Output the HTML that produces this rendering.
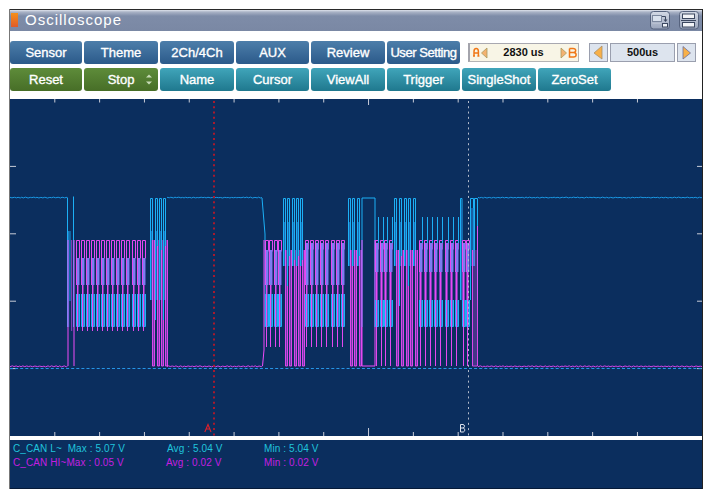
<!DOCTYPE html>
<html><head><meta charset="utf-8">
<style>
*{margin:0;padding:0;box-sizing:border-box}
html,body{width:712px;height:498px;background:#fff;overflow:hidden;font-family:"Liberation Sans",sans-serif}
.a{position:absolute}
#tb{left:9px;top:9px;width:694px;height:22px;border-top:1px solid #2a2a2a;background:linear-gradient(#dfe3ec 0px,#aab3c6 2px,#7e8ca8 6px,#7a88a4 100%)}
#ttl{left:25px;top:10px;font-size:15px;letter-spacing:1px;color:#fff;line-height:20px}
.btn{position:absolute;height:23px;border-radius:3px;color:#fff;font-size:13px;text-align:center;line-height:24px;-webkit-text-stroke:0.35px #fff}
.b1{top:41px;background:linear-gradient(#4d7eaa,#2b5a8a)}
.g1{top:68px;background:linear-gradient(#5e8c3a,#476e27)}
.t1{top:68px;background:linear-gradient(#40a5ba,#1f788e)}
svg{position:absolute;left:0;top:0}
</style></head><body>
<div id="tb" class="a"></div>
<div class="a" style="left:11px;top:13px;width:7px;height:14px;background:linear-gradient(#f5901a,#e05a28)"></div>
<div id="ttl" class="a">Oscilloscope</div>
<div class="a" style="left:9px;top:9px;width:1px;height:480px;background:#777"></div>
<div class="a" style="left:702px;top:9px;width:1px;height:480px;background:#222"></div>

<div class="btn b1" style="left:10px;width:72px">Sensor</div>
<div class="btn b1" style="left:84px;width:74px">Theme</div>
<div class="btn b1" style="left:160px;width:74px">2Ch/4Ch</div>
<div class="btn b1" style="left:236px;width:73px">AUX</div>
<div class="btn b1" style="left:311px;width:74px">Review</div>
<div class="btn b1" style="left:387px;width:73px;letter-spacing:-0.45px">User Setting</div>

<div class="btn g1" style="left:10px;width:72px">Reset</div>
<div class="btn g1" style="left:84px;width:74px">Stop</div>
<div class="btn t1" style="left:160px;width:74px">Name</div>
<div class="btn t1" style="left:236px;width:73px">Cursor</div>
<div class="btn t1" style="left:311px;width:74px">ViewAll</div>
<div class="btn t1" style="left:387px;width:73px">Trigger</div>
<div class="btn t1" style="left:462px;width:74px">SingleShot</div>
<div class="btn t1" style="left:538px;width:73px">ZeroSet</div>

<div class="a" style="left:468px;top:43px;width:111px;height:19px;background:#f8f5e6;border:1px solid #b4b4b4;border-left:2px solid #a4a4ac;border-top-color:#a8a8b0"></div>
<div class="a" style="left:589px;top:43px;width:19px;height:19px;background:#dde4ee;border:1px solid #9a9fae"></div>
<div class="a" style="left:610px;top:43px;width:65px;height:19px;background:#dde4ee;border:1px solid #9a9fae"></div>
<div class="a" style="left:677px;top:43px;width:19px;height:19px;background:#dde4ee;border:1px solid #9a9fae"></div>

<div class="a" style="left:10px;top:99px;width:692px;height:337px;background:#0b2e5e"></div>
<div class="a" style="left:10px;top:436px;width:692px;height:4px;background:#fff"></div>
<div class="a" style="left:10px;top:440px;width:692px;height:49px;background:#0b2e5e;border-bottom:1px solid #061a38"></div>

<!-- title icons -->
<svg class="a" style="left:649px;top:10px" width="22" height="21" viewBox="0 0 22 21">
<defs><linearGradient id="ig" x1="0" y1="0" x2="0" y2="1"><stop offset="0" stop-color="#d4dae6"/><stop offset="1" stop-color="#9aa5bb"/></linearGradient></defs>
<rect x="1.5" y="1.5" width="19" height="17.5" rx="3" fill="url(#ig)" stroke="#56637e"/>
<rect x="3.5" y="5.5" width="9" height="6" fill="#d8e0ec" stroke="#7c889e"/>
<path d="M3.5 13.5H12.5" stroke="#b8c0d0"/>
<path d="M13 6.5H16.5V10" stroke="#3c4860" stroke-width="1" fill="none"/>
<path d="M14.5 9.5H18.5L16.5 12Z" fill="#3c4860"/>
<rect x="13.5" y="13.5" width="5" height="3.5" fill="#f0f3f8" stroke="#3c4860"/>
</svg>
<svg class="a" style="left:678px;top:10px" width="22" height="21" viewBox="0 0 22 21">
<rect x="1.5" y="1.5" width="19" height="17.5" rx="3" fill="url(#ig)" stroke="#56637e"/>
<rect x="4.5" y="4" width="12" height="4.5" fill="#f2f4f8" stroke="#3c4860"/>
<path d="M3 10.5H18" stroke="#3c4860"/>
<rect x="4.5" y="12.5" width="12" height="4.5" fill="#f2f4f8" stroke="#3c4860"/>
</svg>
<!-- stop arrows -->
<svg class="a" style="left:144px;top:73px" width="10" height="14" viewBox="0 0 10 14">
<path d="M2 4.5L5 1.5L8 4.5Z" fill="#c9dcb8"/><path d="M2 8.5L5 11.5L8 8.5Z" fill="#c9dcb8"/>
</svg>
<!-- AB box -->
<svg class="a" style="left:468px;top:43px" width="111" height="19" viewBox="0 0 111 19">
<path d="M6 13V8.5Q6 5.5 8.2 5.5Q10.4 5.5 10.4 8.5V13M6 10H10.4M5 13H7M9.4 13H11.4" stroke="#f07818" stroke-width="1.5" fill="none"/>
<path d="M19 5L13.5 10L19 15Z" fill="#f4b270" stroke="#a89a60" stroke-width="0.8"/>
<path d="M93 5L98.5 10L93 15Z" fill="#f4b270" stroke="#a89a60" stroke-width="0.8"/>
<path d="M101.5 5.5H105C108.5 5.5 108.5 9.5 105.5 9.5H101.5M105.5 9.5C109 9.5 109 14 105.5 14H101.5V5.5" stroke="#f07818" stroke-width="1.5" fill="none"/>
</svg>
<div class="a" style="left:468px;top:43px;width:111px;height:19px;font-weight:bold;font-size:11px;line-height:19px;text-align:center;color:#111">2830 us</div>
<svg class="a" style="left:589px;top:43px" width="19" height="19" viewBox="0 0 19 19">
<path d="M13 3L5 10L13 16Z" fill="#f8b048" stroke="#a8906a" stroke-width="0.8"/>
</svg>
<svg class="a" style="left:677px;top:43px" width="19" height="19" viewBox="0 0 19 19">
<path d="M6 3.5L13.5 10L6 16Z" fill="#f8b048" stroke="#6a70a0" stroke-width="0.8"/>
</svg>
<div class="a" style="left:610px;top:43px;width:65px;height:19px;font-weight:bold;font-size:11px;line-height:19px;text-align:center;color:#111">500us</div>
<!-- info -->
<div class="a" style="left:13px;top:442px;font-size:10px;letter-spacing:0.1px;line-height:13px;color:#20c4dc;white-space:pre">C_CAN L~  Max : 5.07 V</div>
<div class="a" style="left:13px;top:456px;font-size:10px;letter-spacing:0.1px;line-height:13px;color:#c41ee0;white-space:pre">C_CAN HI~Max : 0.05 V</div>
<div class="a" style="left:167px;top:442px;font-size:10px;letter-spacing:0.1px;line-height:13px;color:#20c4dc;white-space:pre">Avg : 5.04 V</div>
<div class="a" style="left:166px;top:456px;font-size:10px;letter-spacing:0.1px;line-height:13px;color:#c41ee0;white-space:pre">Avg : 0.02 V</div>
<div class="a" style="left:264px;top:442px;font-size:10px;letter-spacing:0.1px;line-height:13px;color:#20c4dc;white-space:pre">Min : 5.04 V</div>
<div class="a" style="left:264px;top:456px;font-size:10px;letter-spacing:0.1px;line-height:13px;color:#c41ee0;white-space:pre">Min : 0.02 V</div>
<svg width="712" height="498" viewBox="0 0 712 498">
<clipPath id="cp"><rect x="10" y="99" width="692" height="337"/></clipPath><g clip-path="url(#cp)"><path d="M54.8 99V102.5" stroke="#c8ccd8"/>
<path d="M54.8 436V432" stroke="#c8ccd8"/>
<path d="M99.62 99V102.5" stroke="#c8ccd8"/>
<path d="M99.62 436V432" stroke="#c8ccd8"/>
<path d="M144.44 99V102.5" stroke="#c8ccd8"/>
<path d="M144.44 436V432" stroke="#c8ccd8"/>
<path d="M189.26 99V102.5" stroke="#c8ccd8"/>
<path d="M189.26 436V432" stroke="#c8ccd8"/>
<path d="M234.08 99V102.5" stroke="#c8ccd8"/>
<path d="M234.08 436V432" stroke="#c8ccd8"/>
<path d="M278.9 99V102.5" stroke="#c8ccd8"/>
<path d="M278.9 436V432" stroke="#c8ccd8"/>
<path d="M323.72 99V102.5" stroke="#c8ccd8"/>
<path d="M323.72 436V432" stroke="#c8ccd8"/>
<path d="M368.54 99V105" stroke="#c8ccd8"/>
<path d="M368.54 436V428" stroke="#c8ccd8"/>
<path d="M413.36 99V102.5" stroke="#c8ccd8"/>
<path d="M413.36 436V432" stroke="#c8ccd8"/>
<path d="M458.18 99V102.5" stroke="#c8ccd8"/>
<path d="M458.18 436V432" stroke="#c8ccd8"/>
<path d="M503.0 99V102.5" stroke="#c8ccd8"/>
<path d="M503.0 436V432" stroke="#c8ccd8"/>
<path d="M547.82 99V102.5" stroke="#c8ccd8"/>
<path d="M547.82 436V432" stroke="#c8ccd8"/>
<path d="M592.64 99V102.5" stroke="#c8ccd8"/>
<path d="M592.64 436V432" stroke="#c8ccd8"/>
<path d="M637.46 99V102.5" stroke="#c8ccd8"/>
<path d="M637.46 436V432" stroke="#c8ccd8"/>
<path d="M10 166.4H16" stroke="#c8ccd8"/>
<path d="M697 166.4H702" stroke="#c8ccd8"/>
<path d="M10 233.8H16" stroke="#c8ccd8"/>
<path d="M697 233.8H702" stroke="#c8ccd8"/>
<path d="M10 301.2H16" stroke="#c8ccd8"/>
<path d="M697 301.2H702" stroke="#c8ccd8"/>
<path d="M10 368.6H16" stroke="#c8ccd8"/>
<path d="M697 368.6H702" stroke="#c8ccd8"/><path d="M10 368.5H702" stroke="#2694e6" stroke-dasharray="3 2.1"/><path d="M10 197.3L11.94 197.87L14.45 197.29L16.46 197.88L18.08 197.3L20.24 197.97L21.75 197.22L23.26 197.97L25.49 197.12L28.07 198.04L30.26 197.35L31.84 197.66L33.88 197.12L35.51 197.75L36.94 197.29L38.87 197.99L40.89 197.36L42.89 197.91L44.84 197.21L47.44 198.05L49.85 197.38L51.63 197.74L53.37 197.13L55.69 197.81L58.11 197.25L60.66 197.99L62.06 197.18L64.55 197.84L67.13 197.26L67.5 197.9" stroke="#1a98e4" stroke-width="1" fill="none"/>
<path d="M167 197.3L169.33 197.76L170.84 197.23L173.4 197.95L174.94 197.2L176.46 197.67L178.81 197.17L180.89 197.83L182.51 197.39L184.07 197.91L185.61 197.27L187.27 197.76L189.83 197.42L191.6 198L193.25 197.26L195.68 197.91L197.2 197.5L198.85 197.75L201.18 197.23L202.93 197.68L204.44 197.33L206.13 197.89L207.98 197.28L210.53 197.84L212.62 197.45L214.24 197.71L216.73 197.43L218.43 197.73L220.72 197.48L222.35 198.03L224.81 197.34L226.72 197.69L228.16 197.49L229.85 197.93L231.56 197.43L233.67 197.77L235.28 197.39L236.77 197.74L238.84 197.44L240.98 197.76L243.48 197.18L244.9 197.76L246.83 197.12L248.44 197.8L250.53 197.15L252.36 198.01L254.94 197.36L257.17 197.88L258.74 197.11L260.16 198.01L262 197.49" stroke="#1a98e4" stroke-width="1" fill="none"/>
<path d="M478 197.3L479.43 197.9L481.4 197.39L483.19 198.05L484.68 197.32L486.96 198.01L489.25 197.38L491.6 198.02L493.42 197.37L495.9 198L497.8 197.42L500.24 197.88L502.39 197.25L504.49 197.89L505.98 197.36L508.58 198L510.85 197.26L513.13 197.88L515.06 197.44L516.56 197.95L518 197.34L519.97 197.74L522.21 197.3L524.35 198.02L526.06 197.1L527.82 197.92L529.46 197.17L531.95 197.91L533.88 197.46L535.67 197.92L537.31 197.27L539.67 198.02L542.13 197.25L544.23 197.78L545.79 197.3L548.2 197.99L550.45 197.48L552.18 197.72L554.13 197.21L555.78 197.82L557.93 197.3L559.71 197.99L562.29 197.28L563.78 197.66L566.23 197.12L568.48 197.88L570.25 197.42L571.67 197.7L573.62 197.11L576.01 197.74L577.58 197.12L579.74 197.83L581.89 197.36L584.26 198.03L586.48 197.18L588.45 197.72L589.87 197.29L592.12 197.72L593.85 197.24L596.09 197.86L598.22 197.4L600.1 197.97L602.58 197.13L605.1 197.94L606.66 197.28L608.81 198.01L610.66 197.33L613.12 197.97L615.65 197.29L617.83 197.73L620.1 197.43L622.27 197.94L623.92 197.46L626.5 198.04L628.54 197.42L630.33 198.01L632.76 197.24L634.26 197.83L636.32 197.41L638.3 197.66L640.67 197.13L643.03 197.72L644.83 197.42L646.4 197.71L648.42 197.39L650.83 197.93L653.36 197.3L655.9 197.68L657.57 197.31L659.32 197.94L661.48 197.31L663.9 197.87L665.67 197.25L668.08 198.01L669.73 197.44L672.3 197.86L674.38 197.18L676.43 197.85L678.55 197.11L681.12 197.86L683 197.42L685.07 197.85L687.3 197.13L689.35 197.82L691.9 197.47L693.62 197.84L695.17 197.27L697.55 198.01L699.52 197.23L701.15 197.9L702 197.15" stroke="#1a98e4" stroke-width="1" fill="none"/>
<path d="M10 366.7L12.34 365.81L13.97 366.59L16.19 365.93L18.02 366.75L19.54 366.09L21.09 366.7L22.79 365.88L24.83 366.67L26.68 365.97L28.72 366.56L30.36 366.05L32.53 366.71L34.95 366.04L37.38 366.59L39.67 366.12L42.15 366.63L43.93 366.17L45.59 366.9L48.05 365.85L49.74 366.79L51.45 365.84L53.85 366.67L56.2 365.85L58.08 366.77L59.5 365.88L61.72 366.86L64.28 365.85L66.29 366.8L67.5 366.07" stroke="#d444ea" stroke-width="1" fill="none"/>
<path d="M167 366.7L168.63 365.83L170.15 366.51L172.22 366.01L174.3 366.56L175.92 365.88L178.33 366.9L180.84 365.84L182.32 366.88L184.27 366.11L186.06 366.69L188.08 365.97L190.2 366.51L192.44 366.14L194.06 366.68L196.35 365.96L197.98 366.57L200 365.81L202.47 366.82L204.71 366.14L206.87 366.66L208.99 366L211.57 366.82L213.28 366.16L215.57 366.81L217.95 365.96L220.42 366.85L222.66 366.11L224.98 366.66L227.24 365.83L229.05 366.69L230.47 365.94L232.63 366.75L234.31 366.18L236.51 366.64L238.7 366.03L240.74 366.66L243.34 366.06L245.58 366.8L248.16 365.81L250.3 366.8L252.01 365.96L253.47 366.58L255.32 365.84L257.02 366.86L259.08 366L261.64 366.73L262 366.06" stroke="#d444ea" stroke-width="1" fill="none"/>
<path d="M478 366.7L480.37 365.83L482.49 366.8L483.94 366.17L485.53 366.69L487.14 366L489.27 366.52L491.81 365.97L493.84 366.74L495.68 365.91L497.86 366.72L499.6 366.09L501.36 366.51L503.05 365.82L504.64 366.8L506.51 366.16L508.81 366.52L511.39 366.18L512.88 366.86L514.8 365.99L517.36 366.6L519.39 366.17L521.66 366.69L524.23 366.13L526.36 366.55L528.51 365.98L530.15 366.52L532.18 365.85L534.12 366.77L536.06 365.9L538.16 366.67L540.5 366.01L543.09 366.88L545.37 365.9L546.91 366.86L549.25 366.05L551.08 366.61L553.3 366.03L555.41 366.75L557.72 365.88L559.42 366.89L561.92 366.15L563.36 366.52L565.09 365.97L567.24 366.54L569.29 365.83L570.79 366.77L572.85 366.05L574.7 366.69L576.35 365.94L578.65 366.84L580.13 365.85L582.51 366.75L584.83 365.89L586.74 366.6L589.11 365.95L591.29 366.9L593.08 366.02L595.38 366.87L597.29 365.95L598.81 366.85L600.3 365.83L602.38 366.69L604.6 365.92L606.93 366.53L608.59 366.06L610.09 366.62L612.36 366.08L614.1 366.56L615.93 366.09L617.77 366.55L620.02 366.03L622.52 366.88L625.02 365.98L627.38 366.62L629.16 365.96L631.68 366.86L633.38 365.94L635.22 366.65L637.09 365.96L638.73 366.73L641.08 366.02L643.49 366.73L645.1 366.1L647.56 366.61L648.98 366.01L651.04 366.73L653.6 366.06L655.96 366.53L658.02 366.12L659.52 366.53L661.8 366.16L663.3 366.75L664.88 366.1L667.06 366.6L668.72 366.11L670.75 366.81L672.62 365.94L675.18 366.77L677.17 366.01L679.44 366.78L681.94 365.96L684.33 366.77L686.75 366.12L689.15 366.86L691.7 366.06L693.73 366.78L696.09 365.97L698 366.56L700.29 366.2L702 366.57" stroke="#d444ea" stroke-width="1" fill="none"/>
<path d="M67.5 198V327" stroke="#1cb0f6" stroke-width="1" fill="none"/>
<path d="M73.5 196.5V327" stroke="#1cb0f6" stroke-width="1" fill="none"/>
<rect x="68" y="231" width="1.2" height="96" fill="#1a78c0"/>
<rect x="69.5" y="231" width="1" height="70" fill="#1cb0f6" opacity="0.8"/>
<rect x="71" y="240" width="1.2" height="91" fill="#9a40c8" opacity="0.8"/>
<path d="M68 366V240" stroke="#f04af8" stroke-width="1" fill="none"/>
<path d="M74 366V240" stroke="#f04af8" stroke-width="1" fill="none"/>
<path d="M76.5 258.5V240.5H79.5V258.5" stroke="#f04af8" stroke-width="1" fill="none" opacity="0.95"/>
<rect x="77" y="258" width="2" height="27" fill="#7e7cf2"/>
<rect x="76" y="258" width="1" height="27" fill="#f04af8" opacity="0.95"/>
<rect x="79" y="258" width="1" height="27" fill="#6a60d8" opacity="0.6"/>
<rect x="77" y="285" width="1" height="9" fill="#f04af8" opacity="0.95"/>
<rect x="78" y="285" width="1" height="9" fill="#9a40c8" opacity="0.7"/>
<rect x="77" y="294" width="2" height="32.5" fill="#5a88f0" opacity="0.8"/>
<path d="M76.5 294V326.5H79.5V294" stroke="#1cb0f6" stroke-width="1" fill="none"/>
<rect x="77" y="294" width="1" height="37" fill="#f04af8" opacity="0.95"/>
<path d="M81.5 258.5V240.5H84.5V258.5" stroke="#f04af8" stroke-width="1" fill="none" opacity="0.95"/>
<rect x="82" y="258" width="2" height="27" fill="#7e7cf2"/>
<rect x="81" y="258" width="1" height="27" fill="#f04af8" opacity="0.95"/>
<rect x="84" y="258" width="1" height="27" fill="#6a60d8" opacity="0.6"/>
<rect x="82" y="285" width="1" height="9" fill="#f04af8" opacity="0.95"/>
<rect x="83" y="285" width="1" height="9" fill="#9a40c8" opacity="0.7"/>
<rect x="82" y="294" width="2" height="32.5" fill="#5a88f0" opacity="0.8"/>
<path d="M81.5 294V326.5H84.5V294" stroke="#1cb0f6" stroke-width="1" fill="none"/>
<rect x="82" y="294" width="1" height="37" fill="#f04af8" opacity="0.95"/>
<path d="M86.5 258.5V240.5H89.5V258.5" stroke="#f04af8" stroke-width="1" fill="none" opacity="0.95"/>
<rect x="87" y="258" width="2" height="27" fill="#7e7cf2"/>
<rect x="86" y="258" width="1" height="27" fill="#f04af8" opacity="0.95"/>
<rect x="89" y="258" width="1" height="27" fill="#6a60d8" opacity="0.6"/>
<rect x="87" y="285" width="1" height="9" fill="#f04af8" opacity="0.95"/>
<rect x="88" y="285" width="1" height="9" fill="#9a40c8" opacity="0.7"/>
<rect x="87" y="294" width="2" height="32.5" fill="#5a88f0" opacity="0.8"/>
<path d="M86.5 294V326.5H89.5V294" stroke="#1cb0f6" stroke-width="1" fill="none"/>
<rect x="87" y="294" width="1" height="37" fill="#f04af8" opacity="0.95"/>
<path d="M91.5 258.5V240.5H94.5V258.5" stroke="#f04af8" stroke-width="1" fill="none" opacity="0.95"/>
<rect x="92" y="258" width="2" height="27" fill="#7e7cf2"/>
<rect x="91" y="258" width="1" height="27" fill="#f04af8" opacity="0.95"/>
<rect x="94" y="258" width="1" height="27" fill="#6a60d8" opacity="0.6"/>
<rect x="92" y="285" width="1" height="9" fill="#f04af8" opacity="0.95"/>
<rect x="93" y="285" width="1" height="9" fill="#9a40c8" opacity="0.7"/>
<rect x="92" y="294" width="2" height="32.5" fill="#5a88f0" opacity="0.8"/>
<path d="M91.5 294V326.5H94.5V294" stroke="#1cb0f6" stroke-width="1" fill="none"/>
<rect x="92" y="294" width="1" height="37" fill="#f04af8" opacity="0.95"/>
<path d="M96.5 258.5V240.5H99.5V258.5" stroke="#f04af8" stroke-width="1" fill="none" opacity="0.95"/>
<rect x="97" y="258" width="2" height="27" fill="#7e7cf2"/>
<rect x="96" y="258" width="1" height="27" fill="#f04af8" opacity="0.95"/>
<rect x="99" y="258" width="1" height="27" fill="#6a60d8" opacity="0.6"/>
<rect x="97" y="285" width="1" height="9" fill="#f04af8" opacity="0.95"/>
<rect x="98" y="285" width="1" height="9" fill="#9a40c8" opacity="0.7"/>
<rect x="97" y="294" width="2" height="32.5" fill="#5a88f0" opacity="0.8"/>
<path d="M96.5 294V326.5H99.5V294" stroke="#1cb0f6" stroke-width="1" fill="none"/>
<rect x="97" y="294" width="1" height="37" fill="#f04af8" opacity="0.95"/>
<path d="M101.5 258.5V240.5H104.5V258.5" stroke="#f04af8" stroke-width="1" fill="none" opacity="0.95"/>
<rect x="102" y="258" width="2" height="27" fill="#7e7cf2"/>
<rect x="101" y="258" width="1" height="27" fill="#f04af8" opacity="0.95"/>
<rect x="104" y="258" width="1" height="27" fill="#6a60d8" opacity="0.6"/>
<rect x="102" y="285" width="1" height="9" fill="#f04af8" opacity="0.95"/>
<rect x="103" y="285" width="1" height="9" fill="#9a40c8" opacity="0.7"/>
<rect x="102" y="294" width="2" height="32.5" fill="#5a88f0" opacity="0.8"/>
<path d="M101.5 294V326.5H104.5V294" stroke="#1cb0f6" stroke-width="1" fill="none"/>
<rect x="102" y="294" width="1" height="37" fill="#f04af8" opacity="0.95"/>
<path d="M106.5 258.5V240.5H109.5V258.5" stroke="#f04af8" stroke-width="1" fill="none" opacity="0.95"/>
<rect x="107" y="258" width="2" height="27" fill="#7e7cf2"/>
<rect x="106" y="258" width="1" height="27" fill="#f04af8" opacity="0.95"/>
<rect x="109" y="258" width="1" height="27" fill="#6a60d8" opacity="0.6"/>
<rect x="107" y="285" width="1" height="9" fill="#f04af8" opacity="0.95"/>
<rect x="108" y="285" width="1" height="9" fill="#9a40c8" opacity="0.7"/>
<rect x="107" y="294" width="2" height="32.5" fill="#5a88f0" opacity="0.8"/>
<path d="M106.5 294V326.5H109.5V294" stroke="#1cb0f6" stroke-width="1" fill="none"/>
<rect x="107" y="294" width="1" height="37" fill="#f04af8" opacity="0.95"/>
<path d="M111.5 258.5V240.5H114.5V258.5" stroke="#f04af8" stroke-width="1" fill="none" opacity="0.95"/>
<rect x="112" y="258" width="2" height="27" fill="#7e7cf2"/>
<rect x="111" y="258" width="1" height="27" fill="#f04af8" opacity="0.95"/>
<rect x="114" y="258" width="1" height="27" fill="#6a60d8" opacity="0.6"/>
<rect x="112" y="285" width="1" height="9" fill="#f04af8" opacity="0.95"/>
<rect x="113" y="285" width="1" height="9" fill="#9a40c8" opacity="0.7"/>
<rect x="112" y="294" width="2" height="32.5" fill="#5a88f0" opacity="0.8"/>
<path d="M111.5 294V326.5H114.5V294" stroke="#1cb0f6" stroke-width="1" fill="none"/>
<rect x="112" y="294" width="1" height="37" fill="#f04af8" opacity="0.95"/>
<path d="M116.5 258.5V240.5H119.5V258.5" stroke="#f04af8" stroke-width="1" fill="none" opacity="0.95"/>
<rect x="117" y="258" width="2" height="27" fill="#7e7cf2"/>
<rect x="116" y="258" width="1" height="27" fill="#f04af8" opacity="0.95"/>
<rect x="119" y="258" width="1" height="27" fill="#6a60d8" opacity="0.6"/>
<rect x="117" y="285" width="1" height="9" fill="#f04af8" opacity="0.95"/>
<rect x="118" y="285" width="1" height="9" fill="#9a40c8" opacity="0.7"/>
<rect x="117" y="294" width="2" height="32.5" fill="#5a88f0" opacity="0.8"/>
<path d="M116.5 294V326.5H119.5V294" stroke="#1cb0f6" stroke-width="1" fill="none"/>
<rect x="117" y="294" width="1" height="37" fill="#f04af8" opacity="0.95"/>
<path d="M121.5 258.5V240.5H124.5V258.5" stroke="#f04af8" stroke-width="1" fill="none" opacity="0.95"/>
<rect x="122" y="258" width="2" height="27" fill="#7e7cf2"/>
<rect x="121" y="258" width="1" height="27" fill="#f04af8" opacity="0.95"/>
<rect x="124" y="258" width="1" height="27" fill="#6a60d8" opacity="0.6"/>
<rect x="122" y="285" width="1" height="9" fill="#f04af8" opacity="0.95"/>
<rect x="123" y="285" width="1" height="9" fill="#9a40c8" opacity="0.7"/>
<rect x="122" y="294" width="2" height="32.5" fill="#5a88f0" opacity="0.8"/>
<path d="M121.5 294V326.5H124.5V294" stroke="#1cb0f6" stroke-width="1" fill="none"/>
<rect x="122" y="294" width="1" height="37" fill="#f04af8" opacity="0.95"/>
<path d="M126.5 258.5V240.5H129.5V258.5" stroke="#f04af8" stroke-width="1" fill="none" opacity="0.95"/>
<rect x="127" y="258" width="2" height="27" fill="#7e7cf2"/>
<rect x="126" y="258" width="1" height="27" fill="#f04af8" opacity="0.95"/>
<rect x="129" y="258" width="1" height="27" fill="#6a60d8" opacity="0.6"/>
<rect x="127" y="285" width="1" height="9" fill="#f04af8" opacity="0.95"/>
<rect x="128" y="285" width="1" height="9" fill="#9a40c8" opacity="0.7"/>
<rect x="127" y="294" width="2" height="32.5" fill="#5a88f0" opacity="0.8"/>
<path d="M126.5 294V326.5H129.5V294" stroke="#1cb0f6" stroke-width="1" fill="none"/>
<rect x="127" y="294" width="1" height="37" fill="#f04af8" opacity="0.95"/>
<path d="M132.5 258.5V240.5H135.5V258.5" stroke="#f04af8" stroke-width="1" fill="none" opacity="0.95"/>
<rect x="133" y="258" width="2" height="27" fill="#7e7cf2"/>
<rect x="132" y="258" width="1" height="27" fill="#f04af8" opacity="0.95"/>
<rect x="135" y="258" width="1" height="27" fill="#6a60d8" opacity="0.6"/>
<rect x="133" y="285" width="1" height="9" fill="#f04af8" opacity="0.95"/>
<rect x="134" y="285" width="1" height="9" fill="#9a40c8" opacity="0.7"/>
<rect x="133" y="294" width="2" height="32.5" fill="#5a88f0" opacity="0.8"/>
<path d="M132.5 294V326.5H135.5V294" stroke="#1cb0f6" stroke-width="1" fill="none"/>
<rect x="133" y="294" width="1" height="37" fill="#f04af8" opacity="0.95"/>
<path d="M137.5 258.5V240.5H140.5V258.5" stroke="#f04af8" stroke-width="1" fill="none" opacity="0.95"/>
<rect x="138" y="258" width="2" height="27" fill="#7e7cf2"/>
<rect x="137" y="258" width="1" height="27" fill="#f04af8" opacity="0.95"/>
<rect x="140" y="258" width="1" height="27" fill="#6a60d8" opacity="0.6"/>
<rect x="138" y="285" width="1" height="9" fill="#f04af8" opacity="0.95"/>
<rect x="139" y="285" width="1" height="9" fill="#9a40c8" opacity="0.7"/>
<rect x="138" y="294" width="2" height="32.5" fill="#5a88f0" opacity="0.8"/>
<path d="M137.5 294V326.5H140.5V294" stroke="#1cb0f6" stroke-width="1" fill="none"/>
<rect x="138" y="294" width="1" height="37" fill="#f04af8" opacity="0.95"/>
<path d="M142.5 258.5V240.5H145.5V258.5" stroke="#f04af8" stroke-width="1" fill="none" opacity="0.95"/>
<rect x="143" y="258" width="2" height="27" fill="#7e7cf2"/>
<rect x="142" y="258" width="1" height="27" fill="#f04af8" opacity="0.95"/>
<rect x="145" y="258" width="1" height="27" fill="#6a60d8" opacity="0.6"/>
<rect x="143" y="285" width="1" height="9" fill="#f04af8" opacity="0.95"/>
<rect x="144" y="285" width="1" height="9" fill="#9a40c8" opacity="0.7"/>
<rect x="143" y="294" width="2" height="32.5" fill="#5a88f0" opacity="0.8"/>
<path d="M142.5 294V326.5H145.5V294" stroke="#1cb0f6" stroke-width="1" fill="none"/>
<rect x="143" y="294" width="1" height="37" fill="#f04af8" opacity="0.95"/>
<rect x="151" y="231" width="1" height="69" fill="#1a6cb4"/>
<path d="M150.5 300V198.5H152.5V300" stroke="#1cb0f6" stroke-width="1" fill="none"/>
<rect x="153" y="240" width="1" height="126" fill="#9a40c8" opacity="0.7"/>
<path d="M152.5 240V366H154.5V240" stroke="#f04af8" stroke-width="1" fill="none" opacity="0.9"/>
<rect x="156" y="231" width="1" height="69" fill="#1a6cb4"/>
<path d="M155.5 320V198.5H157.5V300" stroke="#1cb0f6" stroke-width="1" fill="none"/>
<rect x="158" y="240" width="1" height="126" fill="#9a40c8" opacity="0.7"/>
<path d="M157.5 246V366H159.5V240" stroke="#f04af8" stroke-width="1" fill="none" opacity="0.9"/>
<rect x="160" y="231" width="1" height="69" fill="#1a6cb4"/>
<path d="M159.5 300V198.5H161.5V300" stroke="#1cb0f6" stroke-width="1" fill="none"/>
<rect x="162" y="240" width="1" height="126" fill="#9a40c8" opacity="0.7"/>
<path d="M161.5 250V366H163.5V240" stroke="#f04af8" stroke-width="1" fill="none" opacity="0.9"/>
<rect x="164" y="231" width="1" height="69" fill="#1a6cb4"/>
<path d="M163.5 320V198.5H165.5V300" stroke="#1cb0f6" stroke-width="1" fill="none"/>
<rect x="166" y="240" width="1" height="126" fill="#9a40c8" opacity="0.7"/>
<path d="M165.5 246V366H167.5V240" stroke="#f04af8" stroke-width="1" fill="none" opacity="0.9"/>
<path d="M262 198L265 234V327" stroke="#1cb0f6" stroke-width="1" fill="none"/>
<path d="M262.5 366L264 350V240" stroke="#f04af8" stroke-width="1" fill="none"/>
<path d="M265.5 251.5V240.5H268.5V251.5" stroke="#f04af8" stroke-width="1" fill="none" opacity="0.95"/>
<rect x="266" y="250" width="2" height="35" fill="#7e7cf2"/>
<rect x="265" y="250" width="1" height="35" fill="#f04af8" opacity="0.95"/>
<rect x="268" y="250" width="1" height="35" fill="#6a60d8" opacity="0.6"/>
<rect x="266" y="285" width="1" height="9" fill="#f04af8" opacity="0.95"/>
<rect x="267" y="285" width="1" height="9" fill="#9a40c8" opacity="0.7"/>
<rect x="266" y="294" width="2" height="32.5" fill="#5a88f0" opacity="0.8"/>
<path d="M265.5 294V326.5H268.5V294" stroke="#1cb0f6" stroke-width="1" fill="none"/>
<rect x="266" y="294" width="1" height="53" fill="#f04af8" opacity="0.95"/>
<path d="M269.5 251.5V240.5H272.5V251.5" stroke="#f04af8" stroke-width="1" fill="none" opacity="0.95"/>
<rect x="270" y="250" width="2" height="35" fill="#7e7cf2"/>
<rect x="269" y="250" width="1" height="35" fill="#f04af8" opacity="0.95"/>
<rect x="272" y="250" width="1" height="35" fill="#6a60d8" opacity="0.6"/>
<rect x="270" y="285" width="1" height="9" fill="#f04af8" opacity="0.95"/>
<rect x="271" y="285" width="1" height="9" fill="#9a40c8" opacity="0.7"/>
<rect x="270" y="294" width="2" height="32.5" fill="#5a88f0" opacity="0.8"/>
<path d="M269.5 294V326.5H272.5V294" stroke="#1cb0f6" stroke-width="1" fill="none"/>
<rect x="270" y="294" width="1" height="53" fill="#f04af8" opacity="0.95"/>
<path d="M274.5 251.5V240.5H277.5V251.5" stroke="#f04af8" stroke-width="1" fill="none" opacity="0.95"/>
<rect x="275" y="250" width="2" height="35" fill="#7e7cf2"/>
<rect x="274" y="250" width="1" height="35" fill="#f04af8" opacity="0.95"/>
<rect x="277" y="250" width="1" height="35" fill="#6a60d8" opacity="0.6"/>
<rect x="275" y="285" width="1" height="9" fill="#f04af8" opacity="0.95"/>
<rect x="276" y="285" width="1" height="9" fill="#9a40c8" opacity="0.7"/>
<rect x="275" y="294" width="2" height="32.5" fill="#5a88f0" opacity="0.8"/>
<path d="M274.5 294V326.5H277.5V294" stroke="#1cb0f6" stroke-width="1" fill="none"/>
<rect x="275" y="294" width="1" height="53" fill="#f04af8" opacity="0.95"/>
<path d="M278.5 251.5V240.5H281.5V251.5" stroke="#f04af8" stroke-width="1" fill="none" opacity="0.95"/>
<rect x="279" y="250" width="2" height="35" fill="#7e7cf2"/>
<rect x="278" y="250" width="1" height="35" fill="#f04af8" opacity="0.95"/>
<rect x="281" y="250" width="1" height="35" fill="#6a60d8" opacity="0.6"/>
<rect x="279" y="285" width="1" height="9" fill="#f04af8" opacity="0.95"/>
<rect x="280" y="285" width="1" height="9" fill="#9a40c8" opacity="0.7"/>
<rect x="279" y="294" width="2" height="32.5" fill="#5a88f0" opacity="0.8"/>
<path d="M278.5 294V326.5H281.5V294" stroke="#1cb0f6" stroke-width="1" fill="none"/>
<rect x="279" y="294" width="1" height="53" fill="#f04af8" opacity="0.95"/>
<rect x="284" y="222" width="1" height="44" fill="#1a6cb4"/>
<path d="M283.5 266V198.5H285.5V266" stroke="#1cb0f6" stroke-width="1" fill="none"/>
<rect x="286" y="250" width="1" height="116" fill="#9a40c8" opacity="0.7"/>
<path d="M285.5 250V366H287.5V250" stroke="#f04af8" stroke-width="1" fill="none" opacity="0.9"/>
<rect x="288" y="222" width="1" height="44" fill="#1a6cb4"/>
<path d="M287.5 286V198.5H289.5V266" stroke="#1cb0f6" stroke-width="1" fill="none"/>
<rect x="290" y="250" width="1" height="116" fill="#9a40c8" opacity="0.7"/>
<path d="M289.5 256V366H291.5V250" stroke="#f04af8" stroke-width="1" fill="none" opacity="0.9"/>
<rect x="293" y="222" width="1" height="44" fill="#1a6cb4"/>
<path d="M292.5 266V198.5H294.5V266" stroke="#1cb0f6" stroke-width="1" fill="none"/>
<rect x="295" y="250" width="1" height="116" fill="#9a40c8" opacity="0.7"/>
<path d="M294.5 260V366H296.5V250" stroke="#f04af8" stroke-width="1" fill="none" opacity="0.9"/>
<rect x="297" y="222" width="1" height="44" fill="#1a6cb4"/>
<path d="M296.5 266V198.5H298.5V266" stroke="#1cb0f6" stroke-width="1" fill="none"/>
<rect x="299" y="250" width="1" height="116" fill="#9a40c8" opacity="0.7"/>
<path d="M298.5 256V366H300.5V250" stroke="#f04af8" stroke-width="1" fill="none" opacity="0.9"/>
<rect x="301" y="222" width="1" height="44" fill="#1a6cb4"/>
<path d="M300.5 266V198.5H302.5V266" stroke="#1cb0f6" stroke-width="1" fill="none"/>
<rect x="303" y="250" width="1" height="116" fill="#9a40c8" opacity="0.7"/>
<path d="M302.5 260V366H304.5V250" stroke="#f04af8" stroke-width="1" fill="none" opacity="0.9"/>
<path d="M305.5 249.5V240.5H308.5V249.5" stroke="#f04af8" stroke-width="1" fill="none" opacity="0.95"/>
<rect x="306" y="243" width="2" height="42" fill="#7e7cf2"/>
<rect x="305" y="243" width="1" height="42" fill="#f04af8" opacity="0.95"/>
<rect x="308" y="243" width="1" height="42" fill="#6a60d8" opacity="0.6"/>
<rect x="306" y="285" width="1" height="9" fill="#f04af8" opacity="0.95"/>
<rect x="307" y="285" width="1" height="9" fill="#9a40c8" opacity="0.7"/>
<rect x="306" y="294" width="2" height="32.5" fill="#5a88f0" opacity="0.8"/>
<path d="M305.5 294V326.5H308.5V294" stroke="#1cb0f6" stroke-width="1" fill="none"/>
<rect x="306" y="294" width="1" height="53" fill="#f04af8" opacity="0.95"/>
<path d="M310.5 249.5V240.5H313.5V249.5" stroke="#f04af8" stroke-width="1" fill="none" opacity="0.95"/>
<rect x="311" y="243" width="2" height="42" fill="#7e7cf2"/>
<rect x="310" y="243" width="1" height="42" fill="#f04af8" opacity="0.95"/>
<rect x="313" y="243" width="1" height="42" fill="#6a60d8" opacity="0.6"/>
<rect x="311" y="285" width="1" height="9" fill="#f04af8" opacity="0.95"/>
<rect x="312" y="285" width="1" height="9" fill="#9a40c8" opacity="0.7"/>
<rect x="311" y="294" width="2" height="32.5" fill="#5a88f0" opacity="0.8"/>
<path d="M310.5 294V326.5H313.5V294" stroke="#1cb0f6" stroke-width="1" fill="none"/>
<rect x="311" y="294" width="1" height="53" fill="#f04af8" opacity="0.95"/>
<path d="M315.5 249.5V240.5H318.5V249.5" stroke="#f04af8" stroke-width="1" fill="none" opacity="0.95"/>
<rect x="316" y="243" width="2" height="42" fill="#7e7cf2"/>
<rect x="315" y="243" width="1" height="42" fill="#f04af8" opacity="0.95"/>
<rect x="318" y="243" width="1" height="42" fill="#6a60d8" opacity="0.6"/>
<rect x="316" y="285" width="1" height="9" fill="#f04af8" opacity="0.95"/>
<rect x="317" y="285" width="1" height="9" fill="#9a40c8" opacity="0.7"/>
<rect x="316" y="294" width="2" height="32.5" fill="#5a88f0" opacity="0.8"/>
<path d="M315.5 294V326.5H318.5V294" stroke="#1cb0f6" stroke-width="1" fill="none"/>
<rect x="316" y="294" width="1" height="53" fill="#f04af8" opacity="0.95"/>
<path d="M320.5 249.5V240.5H323.5V249.5" stroke="#f04af8" stroke-width="1" fill="none" opacity="0.95"/>
<rect x="321" y="243" width="2" height="42" fill="#7e7cf2"/>
<rect x="320" y="243" width="1" height="42" fill="#f04af8" opacity="0.95"/>
<rect x="323" y="243" width="1" height="42" fill="#6a60d8" opacity="0.6"/>
<rect x="321" y="285" width="1" height="9" fill="#f04af8" opacity="0.95"/>
<rect x="322" y="285" width="1" height="9" fill="#9a40c8" opacity="0.7"/>
<rect x="321" y="294" width="2" height="32.5" fill="#5a88f0" opacity="0.8"/>
<path d="M320.5 294V326.5H323.5V294" stroke="#1cb0f6" stroke-width="1" fill="none"/>
<rect x="321" y="294" width="1" height="53" fill="#f04af8" opacity="0.95"/>
<path d="M325.5 249.5V240.5H328.5V249.5" stroke="#f04af8" stroke-width="1" fill="none" opacity="0.95"/>
<rect x="326" y="243" width="2" height="42" fill="#7e7cf2"/>
<rect x="325" y="243" width="1" height="42" fill="#f04af8" opacity="0.95"/>
<rect x="328" y="243" width="1" height="42" fill="#6a60d8" opacity="0.6"/>
<rect x="326" y="285" width="1" height="9" fill="#f04af8" opacity="0.95"/>
<rect x="327" y="285" width="1" height="9" fill="#9a40c8" opacity="0.7"/>
<rect x="326" y="294" width="2" height="32.5" fill="#5a88f0" opacity="0.8"/>
<path d="M325.5 294V326.5H328.5V294" stroke="#1cb0f6" stroke-width="1" fill="none"/>
<rect x="326" y="294" width="1" height="53" fill="#f04af8" opacity="0.95"/>
<path d="M331.5 249.5V240.5H334.5V249.5" stroke="#f04af8" stroke-width="1" fill="none" opacity="0.95"/>
<rect x="332" y="243" width="2" height="42" fill="#7e7cf2"/>
<rect x="331" y="243" width="1" height="42" fill="#f04af8" opacity="0.95"/>
<rect x="334" y="243" width="1" height="42" fill="#6a60d8" opacity="0.6"/>
<rect x="332" y="285" width="1" height="9" fill="#f04af8" opacity="0.95"/>
<rect x="333" y="285" width="1" height="9" fill="#9a40c8" opacity="0.7"/>
<rect x="332" y="294" width="2" height="32.5" fill="#5a88f0" opacity="0.8"/>
<path d="M331.5 294V326.5H334.5V294" stroke="#1cb0f6" stroke-width="1" fill="none"/>
<rect x="332" y="294" width="1" height="53" fill="#f04af8" opacity="0.95"/>
<path d="M336.5 249.5V240.5H339.5V249.5" stroke="#f04af8" stroke-width="1" fill="none" opacity="0.95"/>
<rect x="337" y="243" width="2" height="42" fill="#7e7cf2"/>
<rect x="336" y="243" width="1" height="42" fill="#f04af8" opacity="0.95"/>
<rect x="339" y="243" width="1" height="42" fill="#6a60d8" opacity="0.6"/>
<rect x="337" y="285" width="1" height="9" fill="#f04af8" opacity="0.95"/>
<rect x="338" y="285" width="1" height="9" fill="#9a40c8" opacity="0.7"/>
<rect x="337" y="294" width="2" height="32.5" fill="#5a88f0" opacity="0.8"/>
<path d="M336.5 294V326.5H339.5V294" stroke="#1cb0f6" stroke-width="1" fill="none"/>
<rect x="337" y="294" width="1" height="53" fill="#f04af8" opacity="0.95"/>
<path d="M341.5 249.5V240.5H344.5V249.5" stroke="#f04af8" stroke-width="1" fill="none" opacity="0.95"/>
<rect x="342" y="243" width="2" height="42" fill="#7e7cf2"/>
<rect x="341" y="243" width="1" height="42" fill="#f04af8" opacity="0.95"/>
<rect x="344" y="243" width="1" height="42" fill="#6a60d8" opacity="0.6"/>
<rect x="342" y="285" width="1" height="9" fill="#f04af8" opacity="0.95"/>
<rect x="343" y="285" width="1" height="9" fill="#9a40c8" opacity="0.7"/>
<rect x="342" y="294" width="2" height="32.5" fill="#5a88f0" opacity="0.8"/>
<path d="M341.5 294V326.5H344.5V294" stroke="#1cb0f6" stroke-width="1" fill="none"/>
<rect x="342" y="294" width="1" height="53" fill="#f04af8" opacity="0.95"/>
<rect x="349" y="222" width="1" height="44" fill="#1a6cb4"/>
<path d="M348.5 266V198.5H350.5V266" stroke="#1cb0f6" stroke-width="1" fill="none"/>
<rect x="351" y="250" width="1" height="116" fill="#9a40c8" opacity="0.7"/>
<path d="M350.5 250V366H352.5V250" stroke="#f04af8" stroke-width="1" fill="none" opacity="0.9"/>
<rect x="353" y="222" width="1" height="44" fill="#1a6cb4"/>
<path d="M352.5 266V198.5H354.5V266" stroke="#1cb0f6" stroke-width="1" fill="none"/>
<rect x="355" y="250" width="1" height="116" fill="#9a40c8" opacity="0.7"/>
<path d="M354.5 250V366H356.5V250" stroke="#f04af8" stroke-width="1" fill="none" opacity="0.9"/>
<rect x="358" y="222" width="1" height="44" fill="#1a6cb4"/>
<path d="M357.5 266V198.5H359.5V266" stroke="#1cb0f6" stroke-width="1" fill="none"/>
<rect x="360" y="250" width="1" height="116" fill="#9a40c8" opacity="0.7"/>
<path d="M359.5 256V366H361.5V250" stroke="#f04af8" stroke-width="1" fill="none" opacity="0.9"/>
<path d="M362 327V198H375V222V327" stroke="#1cb0f6" stroke-width="1" fill="none"/>
<path d="M362 240V366H375V240" stroke="#f04af8" stroke-width="1" fill="none"/>
<path d="M375.5 249.5V240.5H378.5V249.5" stroke="#f04af8" stroke-width="1" fill="none" opacity="0.95"/>
<rect x="376" y="243" width="2" height="29" fill="#7e7cf2"/>
<rect x="375" y="243" width="1" height="29" fill="#f04af8" opacity="0.95"/>
<rect x="378" y="243" width="1" height="29" fill="#6a60d8" opacity="0.6"/>
<rect x="375" y="272" width="3" height="28" fill="#9a40c8" opacity="0.8"/>
<rect x="376" y="272" width="1" height="28" fill="#f04af8" opacity="0.95"/>
<rect x="376" y="300" width="2" height="26.5" fill="#5a88f0" opacity="0.8"/>
<path d="M375.5 300V326.5H378.5V300" stroke="#1cb0f6" stroke-width="1" fill="none"/>
<rect x="376" y="300" width="1" height="66" fill="#f04af8" opacity="0.95"/>
<rect x="378" y="217" width="1" height="26" fill="#1cb0f6"/>
<path d="M380.5 249.5V240.5H383.5V249.5" stroke="#f04af8" stroke-width="1" fill="none" opacity="0.95"/>
<rect x="381" y="243" width="2" height="29" fill="#7e7cf2"/>
<rect x="380" y="243" width="1" height="29" fill="#f04af8" opacity="0.95"/>
<rect x="383" y="243" width="1" height="29" fill="#6a60d8" opacity="0.6"/>
<rect x="380" y="272" width="3" height="28" fill="#9a40c8" opacity="0.8"/>
<rect x="381" y="272" width="1" height="28" fill="#f04af8" opacity="0.95"/>
<rect x="381" y="300" width="2" height="26.5" fill="#5a88f0" opacity="0.8"/>
<path d="M380.5 300V326.5H383.5V300" stroke="#1cb0f6" stroke-width="1" fill="none"/>
<rect x="381" y="300" width="1" height="66" fill="#f04af8" opacity="0.95"/>
<rect x="383" y="217" width="1" height="26" fill="#1cb0f6"/>
<path d="M384.5 249.5V240.5H387.5V249.5" stroke="#f04af8" stroke-width="1" fill="none" opacity="0.95"/>
<rect x="385" y="243" width="2" height="29" fill="#7e7cf2"/>
<rect x="384" y="243" width="1" height="29" fill="#f04af8" opacity="0.95"/>
<rect x="387" y="243" width="1" height="29" fill="#6a60d8" opacity="0.6"/>
<rect x="384" y="272" width="3" height="28" fill="#9a40c8" opacity="0.8"/>
<rect x="385" y="272" width="1" height="28" fill="#f04af8" opacity="0.95"/>
<rect x="385" y="300" width="2" height="26.5" fill="#5a88f0" opacity="0.8"/>
<path d="M384.5 300V326.5H387.5V300" stroke="#1cb0f6" stroke-width="1" fill="none"/>
<rect x="385" y="300" width="1" height="66" fill="#f04af8" opacity="0.95"/>
<rect x="387" y="217" width="1" height="26" fill="#1cb0f6"/>
<path d="M389.5 249.5V240.5H392.5V249.5" stroke="#f04af8" stroke-width="1" fill="none" opacity="0.95"/>
<rect x="390" y="243" width="2" height="29" fill="#7e7cf2"/>
<rect x="389" y="243" width="1" height="29" fill="#f04af8" opacity="0.95"/>
<rect x="392" y="243" width="1" height="29" fill="#6a60d8" opacity="0.6"/>
<rect x="389" y="272" width="3" height="28" fill="#9a40c8" opacity="0.8"/>
<rect x="390" y="272" width="1" height="28" fill="#f04af8" opacity="0.95"/>
<rect x="390" y="300" width="2" height="26.5" fill="#5a88f0" opacity="0.8"/>
<path d="M389.5 300V326.5H392.5V300" stroke="#1cb0f6" stroke-width="1" fill="none"/>
<rect x="390" y="300" width="1" height="66" fill="#f04af8" opacity="0.95"/>
<rect x="392" y="217" width="1" height="26" fill="#1cb0f6"/>
<rect x="395" y="222" width="1" height="44" fill="#1a6cb4"/>
<path d="M394.5 266V198.5H396.5V266" stroke="#1cb0f6" stroke-width="1" fill="none"/>
<rect x="397" y="250" width="1" height="116" fill="#9a40c8" opacity="0.7"/>
<path d="M396.5 250V366H398.5V250" stroke="#f04af8" stroke-width="1" fill="none" opacity="0.9"/>
<rect x="400" y="222" width="1" height="44" fill="#1a6cb4"/>
<path d="M399.5 306V198.5H401.5V266" stroke="#1cb0f6" stroke-width="1" fill="none"/>
<rect x="402" y="250" width="1" height="116" fill="#9a40c8" opacity="0.7"/>
<path d="M401.5 256V366H403.5V250" stroke="#f04af8" stroke-width="1" fill="none" opacity="0.9"/>
<rect x="405" y="222" width="1" height="44" fill="#1a6cb4"/>
<path d="M404.5 266V198.5H406.5V266" stroke="#1cb0f6" stroke-width="1" fill="none"/>
<rect x="407" y="250" width="1" height="116" fill="#9a40c8" opacity="0.7"/>
<path d="M406.5 250V366H408.5V250" stroke="#f04af8" stroke-width="1" fill="none" opacity="0.9"/>
<rect x="409" y="222" width="1" height="44" fill="#1a6cb4"/>
<path d="M408.5 286V198.5H410.5V266" stroke="#1cb0f6" stroke-width="1" fill="none"/>
<rect x="411" y="250" width="1" height="116" fill="#9a40c8" opacity="0.7"/>
<path d="M410.5 250V366H412.5V250" stroke="#f04af8" stroke-width="1" fill="none" opacity="0.9"/>
<rect x="414" y="222" width="1" height="44" fill="#1a6cb4"/>
<path d="M413.5 266V198.5H415.5V266" stroke="#1cb0f6" stroke-width="1" fill="none"/>
<rect x="416" y="250" width="1" height="116" fill="#9a40c8" opacity="0.7"/>
<path d="M415.5 250V366H417.5V250" stroke="#f04af8" stroke-width="1" fill="none" opacity="0.9"/>
<path d="M419.5 249.5V240.5H422.5V249.5" stroke="#f04af8" stroke-width="1" fill="none" opacity="0.95"/>
<rect x="420" y="243" width="2" height="29" fill="#7e7cf2"/>
<rect x="419" y="243" width="1" height="29" fill="#f04af8" opacity="0.95"/>
<rect x="422" y="243" width="1" height="29" fill="#6a60d8" opacity="0.6"/>
<rect x="419" y="272" width="3" height="28" fill="#9a40c8" opacity="0.8"/>
<rect x="420" y="272" width="1" height="28" fill="#f04af8" opacity="0.95"/>
<rect x="420" y="300" width="2" height="26.5" fill="#5a88f0" opacity="0.8"/>
<path d="M419.5 300V326.5H422.5V300" stroke="#1cb0f6" stroke-width="1" fill="none"/>
<rect x="420" y="300" width="1" height="66" fill="#f04af8" opacity="0.95"/>
<rect x="422" y="217" width="1" height="26" fill="#1cb0f6"/>
<path d="M424.5 249.5V240.5H427.5V249.5" stroke="#f04af8" stroke-width="1" fill="none" opacity="0.95"/>
<rect x="425" y="243" width="2" height="29" fill="#7e7cf2"/>
<rect x="424" y="243" width="1" height="29" fill="#f04af8" opacity="0.95"/>
<rect x="427" y="243" width="1" height="29" fill="#6a60d8" opacity="0.6"/>
<rect x="424" y="272" width="3" height="28" fill="#9a40c8" opacity="0.8"/>
<rect x="425" y="272" width="1" height="28" fill="#f04af8" opacity="0.95"/>
<rect x="425" y="300" width="2" height="26.5" fill="#5a88f0" opacity="0.8"/>
<path d="M424.5 300V326.5H427.5V300" stroke="#1cb0f6" stroke-width="1" fill="none"/>
<rect x="425" y="300" width="1" height="66" fill="#f04af8" opacity="0.95"/>
<rect x="427" y="217" width="1" height="26" fill="#1cb0f6"/>
<path d="M429.5 249.5V240.5H432.5V249.5" stroke="#f04af8" stroke-width="1" fill="none" opacity="0.95"/>
<rect x="430" y="243" width="2" height="29" fill="#7e7cf2"/>
<rect x="429" y="243" width="1" height="29" fill="#f04af8" opacity="0.95"/>
<rect x="432" y="243" width="1" height="29" fill="#6a60d8" opacity="0.6"/>
<rect x="429" y="272" width="3" height="28" fill="#9a40c8" opacity="0.8"/>
<rect x="430" y="272" width="1" height="28" fill="#f04af8" opacity="0.95"/>
<rect x="430" y="300" width="2" height="26.5" fill="#5a88f0" opacity="0.8"/>
<path d="M429.5 300V326.5H432.5V300" stroke="#1cb0f6" stroke-width="1" fill="none"/>
<rect x="430" y="300" width="1" height="66" fill="#f04af8" opacity="0.95"/>
<rect x="432" y="217" width="1" height="26" fill="#1cb0f6"/>
<path d="M434.5 249.5V240.5H437.5V249.5" stroke="#f04af8" stroke-width="1" fill="none" opacity="0.95"/>
<rect x="435" y="243" width="2" height="29" fill="#7e7cf2"/>
<rect x="434" y="243" width="1" height="29" fill="#f04af8" opacity="0.95"/>
<rect x="437" y="243" width="1" height="29" fill="#6a60d8" opacity="0.6"/>
<rect x="434" y="272" width="3" height="28" fill="#9a40c8" opacity="0.8"/>
<rect x="435" y="272" width="1" height="28" fill="#f04af8" opacity="0.95"/>
<rect x="435" y="300" width="2" height="26.5" fill="#5a88f0" opacity="0.8"/>
<path d="M434.5 300V326.5H437.5V300" stroke="#1cb0f6" stroke-width="1" fill="none"/>
<rect x="435" y="300" width="1" height="66" fill="#f04af8" opacity="0.95"/>
<rect x="437" y="217" width="1" height="26" fill="#1cb0f6"/>
<path d="M439.5 249.5V240.5H442.5V249.5" stroke="#f04af8" stroke-width="1" fill="none" opacity="0.95"/>
<rect x="440" y="243" width="2" height="29" fill="#7e7cf2"/>
<rect x="439" y="243" width="1" height="29" fill="#f04af8" opacity="0.95"/>
<rect x="442" y="243" width="1" height="29" fill="#6a60d8" opacity="0.6"/>
<rect x="439" y="272" width="3" height="28" fill="#9a40c8" opacity="0.8"/>
<rect x="440" y="272" width="1" height="28" fill="#f04af8" opacity="0.95"/>
<rect x="440" y="300" width="2" height="26.5" fill="#5a88f0" opacity="0.8"/>
<path d="M439.5 300V326.5H442.5V300" stroke="#1cb0f6" stroke-width="1" fill="none"/>
<rect x="440" y="300" width="1" height="66" fill="#f04af8" opacity="0.95"/>
<rect x="442" y="217" width="1" height="26" fill="#1cb0f6"/>
<path d="M445.5 249.5V240.5H448.5V249.5" stroke="#f04af8" stroke-width="1" fill="none" opacity="0.95"/>
<rect x="446" y="243" width="2" height="29" fill="#7e7cf2"/>
<rect x="445" y="243" width="1" height="29" fill="#f04af8" opacity="0.95"/>
<rect x="448" y="243" width="1" height="29" fill="#6a60d8" opacity="0.6"/>
<rect x="445" y="272" width="3" height="28" fill="#9a40c8" opacity="0.8"/>
<rect x="446" y="272" width="1" height="28" fill="#f04af8" opacity="0.95"/>
<rect x="446" y="300" width="2" height="26.5" fill="#5a88f0" opacity="0.8"/>
<path d="M445.5 300V326.5H448.5V300" stroke="#1cb0f6" stroke-width="1" fill="none"/>
<rect x="446" y="300" width="1" height="66" fill="#f04af8" opacity="0.95"/>
<rect x="448" y="217" width="1" height="26" fill="#1cb0f6"/>
<path d="M450.5 249.5V240.5H453.5V249.5" stroke="#f04af8" stroke-width="1" fill="none" opacity="0.95"/>
<rect x="451" y="243" width="2" height="29" fill="#7e7cf2"/>
<rect x="450" y="243" width="1" height="29" fill="#f04af8" opacity="0.95"/>
<rect x="453" y="243" width="1" height="29" fill="#6a60d8" opacity="0.6"/>
<rect x="450" y="272" width="3" height="28" fill="#9a40c8" opacity="0.8"/>
<rect x="451" y="272" width="1" height="28" fill="#f04af8" opacity="0.95"/>
<rect x="451" y="300" width="2" height="26.5" fill="#5a88f0" opacity="0.8"/>
<path d="M450.5 300V326.5H453.5V300" stroke="#1cb0f6" stroke-width="1" fill="none"/>
<rect x="451" y="300" width="1" height="66" fill="#f04af8" opacity="0.95"/>
<rect x="453" y="217" width="1" height="26" fill="#1cb0f6"/>
<path d="M455.5 249.5V240.5H458.5V249.5" stroke="#f04af8" stroke-width="1" fill="none" opacity="0.95"/>
<rect x="456" y="243" width="2" height="29" fill="#7e7cf2"/>
<rect x="455" y="243" width="1" height="29" fill="#f04af8" opacity="0.95"/>
<rect x="458" y="243" width="1" height="29" fill="#6a60d8" opacity="0.6"/>
<rect x="455" y="272" width="3" height="28" fill="#9a40c8" opacity="0.8"/>
<rect x="456" y="272" width="1" height="28" fill="#f04af8" opacity="0.95"/>
<rect x="456" y="300" width="2" height="26.5" fill="#5a88f0" opacity="0.8"/>
<path d="M455.5 300V326.5H458.5V300" stroke="#1cb0f6" stroke-width="1" fill="none"/>
<rect x="456" y="300" width="1" height="66" fill="#f04af8" opacity="0.95"/>
<rect x="458" y="217" width="1" height="26" fill="#1cb0f6"/>
<path d="M460.5 300V198.5H462V300" stroke="#1cb0f6" stroke-width="1" fill="none"/>
<rect x="461" y="208" width="1.2" height="92" fill="#1a6cb4"/>
<path d="M470.5 300V198.5H473.5V266" stroke="#1cb0f6" stroke-width="1" fill="none"/>
<path d="M474.5 266V198.5H477.5V300" stroke="#1cb0f6" stroke-width="1" fill="none"/>
<rect x="471" y="208" width="2.5" height="58" fill="#1a6cb4" opacity="0.8"/>
<path d="M462.5 249.5V240.5H465.5V249.5" stroke="#f04af8" stroke-width="1" fill="none" opacity="0.95"/>
<rect x="463" y="243" width="2" height="29" fill="#7e7cf2"/>
<rect x="462" y="243" width="1" height="29" fill="#f04af8" opacity="0.95"/>
<rect x="465" y="243" width="1" height="29" fill="#6a60d8" opacity="0.6"/>
<rect x="462" y="272" width="3" height="28" fill="#9a40c8" opacity="0.8"/>
<rect x="463" y="272" width="1" height="28" fill="#f04af8" opacity="0.95"/>
<rect x="463" y="300" width="2" height="26.5" fill="#5a88f0" opacity="0.8"/>
<path d="M462.5 300V326.5H465.5V300" stroke="#1cb0f6" stroke-width="1" fill="none"/>
<rect x="463" y="300" width="1" height="66" fill="#f04af8" opacity="0.95"/>
<path d="M466.5 249.5V240.5H469.5V249.5" stroke="#f04af8" stroke-width="1" fill="none" opacity="0.95"/>
<rect x="467" y="243" width="2" height="29" fill="#7e7cf2"/>
<rect x="466" y="243" width="1" height="29" fill="#f04af8" opacity="0.95"/>
<rect x="469" y="243" width="1" height="29" fill="#6a60d8" opacity="0.6"/>
<rect x="466" y="272" width="3" height="28" fill="#9a40c8" opacity="0.8"/>
<rect x="467" y="272" width="1" height="28" fill="#f04af8" opacity="0.95"/>
<rect x="467" y="300" width="2" height="26.5" fill="#5a88f0" opacity="0.8"/>
<path d="M466.5 300V326.5H469.5V300" stroke="#1cb0f6" stroke-width="1" fill="none"/>
<rect x="467" y="300" width="1" height="66" fill="#f04af8" opacity="0.95"/>
<path d="M472.5 250V366H477.5V226" stroke="#f04af8" stroke-width="1" fill="none" opacity="0.9"/>
<rect x="473" y="250" width="4" height="116" fill="#9a40c8" opacity="0.4"/><path d="M214 99V436" stroke="#a81a2e" stroke-width="2" stroke-dasharray="2 3.276" stroke-dashoffset="-2"/><path d="M468.5 99V436" stroke="#b4bccb" stroke-width="1" stroke-dasharray="2 3.276" stroke-dashoffset="-2"/><path d="M204.8 432L208 424.5L211 432M206 429H210" stroke="#e0202a" stroke-width="1.1" fill="none"/><path d="M460.5 424.5H463C465 424.5 465 428 463 428H460.5M463 428C465.3 428 465.3 432 463 432H460.5V424.5" stroke="#dfe4ee" stroke-width="1" fill="none"/></g>
</svg>
</body></html>
